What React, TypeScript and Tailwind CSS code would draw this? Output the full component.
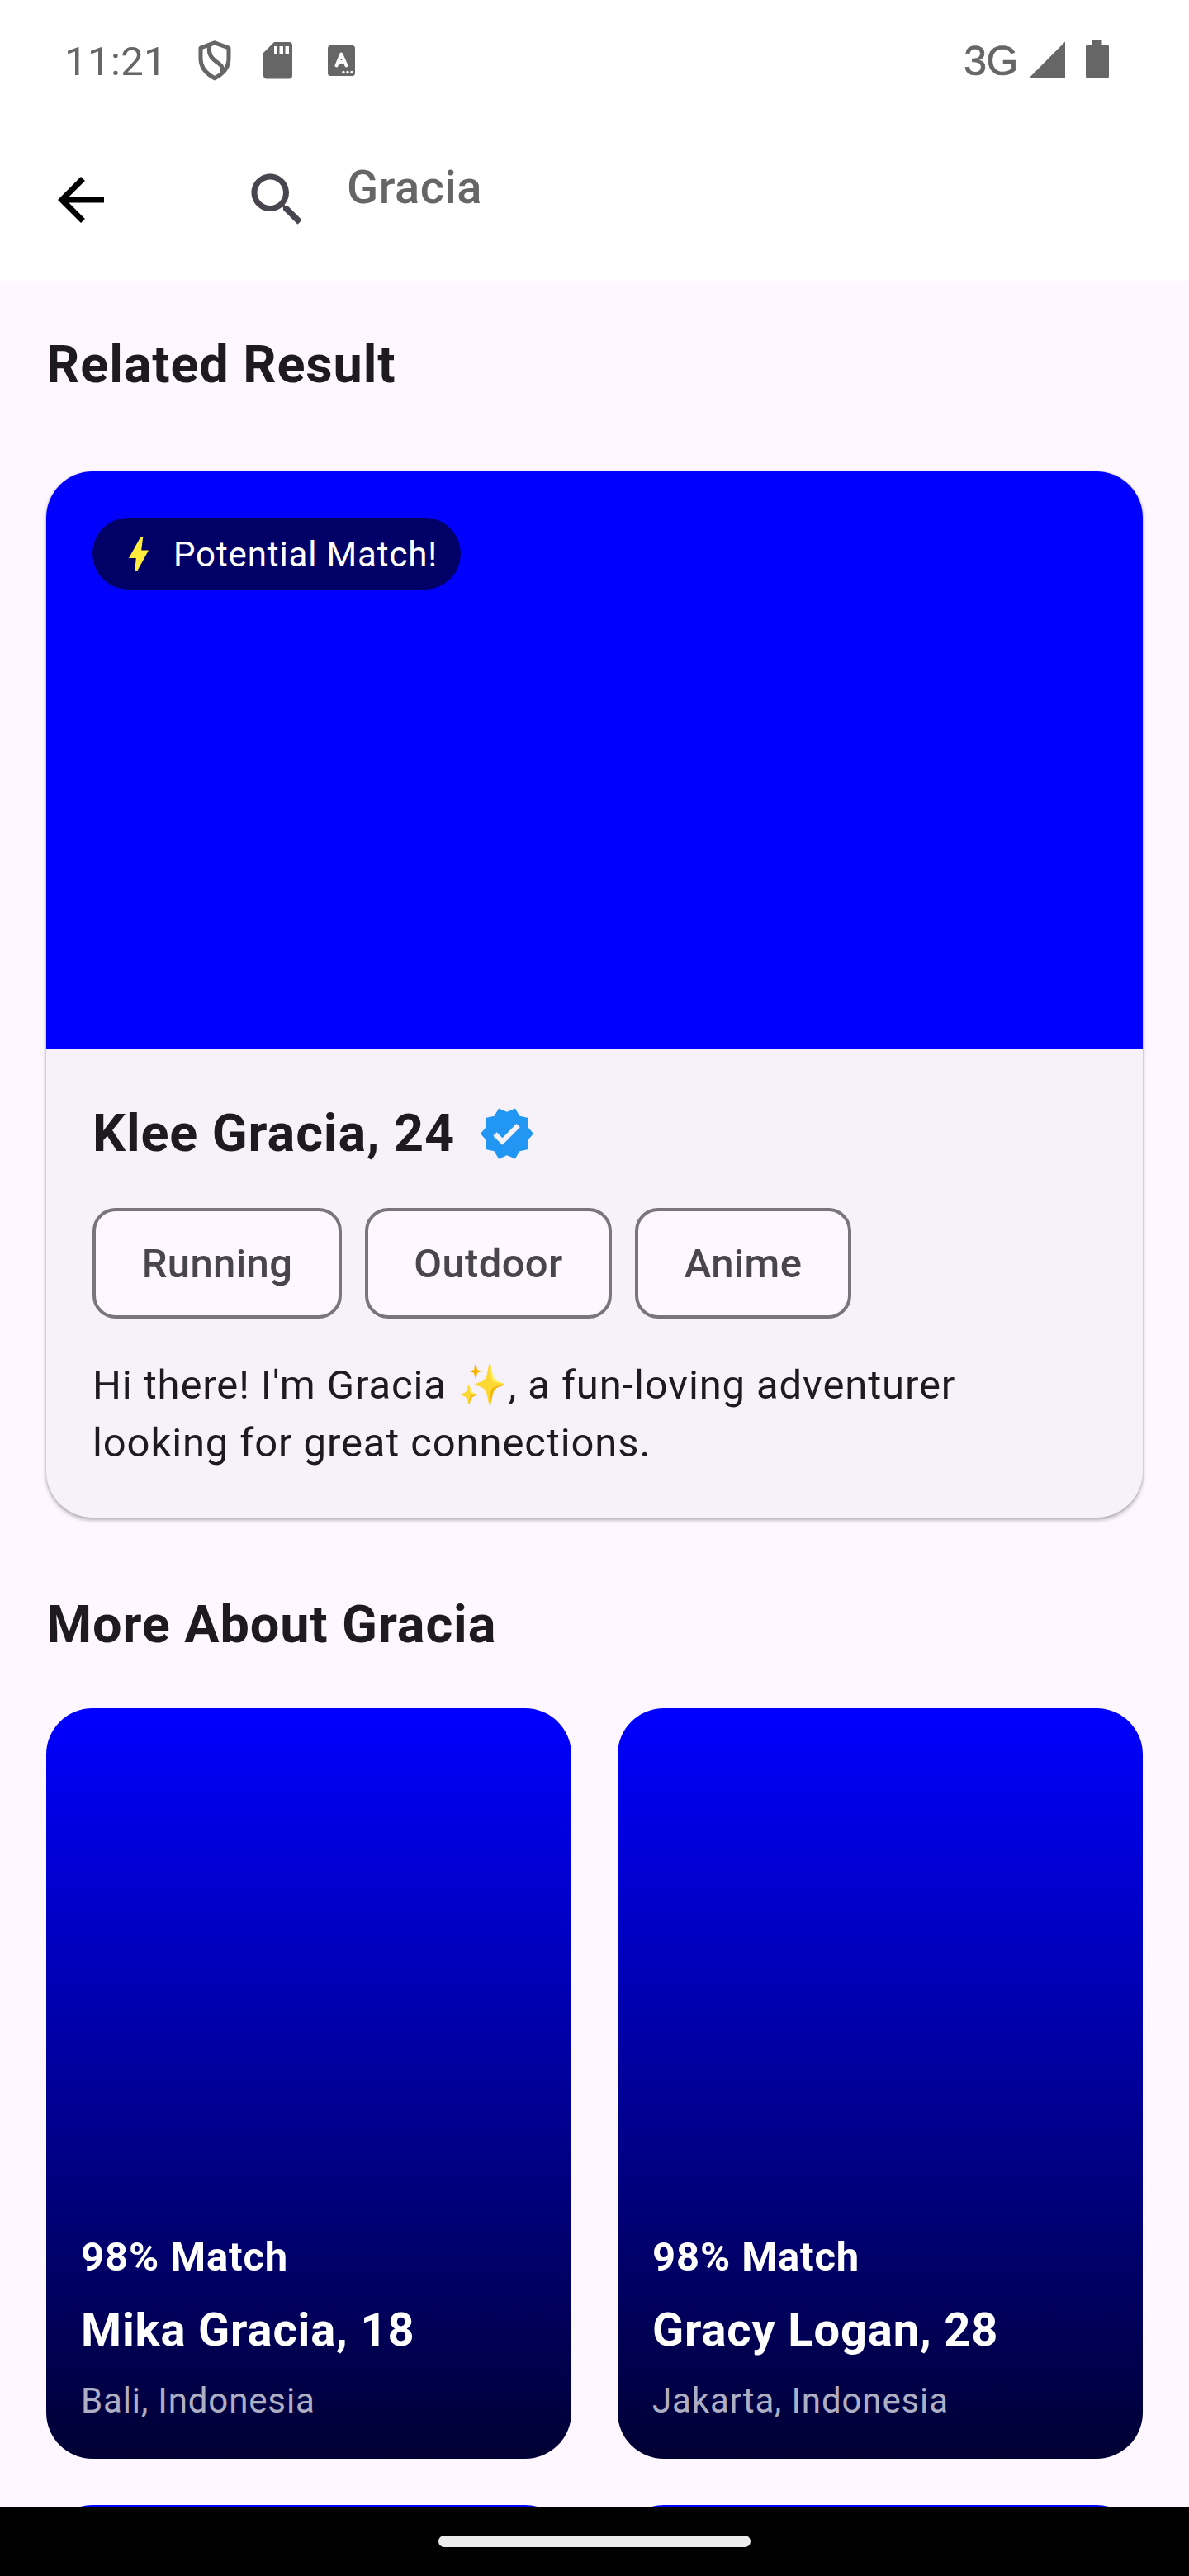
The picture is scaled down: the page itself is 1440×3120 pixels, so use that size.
import React from "react";

const profiles = [
  { match: "98% Match", name: "Mika Gracia, 18", place: "Bali, Indonesia" },
  { match: "98% Match", name: "Gracy Logan, 28", place: "Jakarta, Indonesia" },
];

const interests = [
  { label: "Running", size: "w-[302px]" },
  { label: "Outdoor", size: "w-[299px]" },
  { label: "Anime", size: "w-[262px]" },
];

function StatusBar() {
  return (
    <div className="flex h-[148px] items-center pr-[97px] pb-[2px] pl-[78px] text-[#666666]">
      <span className="mt-[3px] w-[162px] text-[49px] leading-[60px] tracking-[0.4px]">11:21</span>
      <svg className="h-[52px] w-[40px]" viewBox="0 0 40 52" fill="none" stroke="currentColor" strokeWidth="5" strokeLinejoin="round">
        <path d="M20 4.800 37 11V24C37 35 30 42.500 20 47.800 10 42.500 3 35 3 24V11Z" />
        <path d="M14 8C12 16 14 22 21 27 28 32 31 34 28.500 41" />
      </svg>
      <svg className="ml-[39px] h-[52px] w-[35px]" viewBox="0 0 35 52" fill="currentColor" fillRule="evenodd">
        <path d="M13 4H31Q35 4 35 8V44Q35 48.500 31 48.500H4Q0 48.500 0 44V17ZM13 9V18H17V9ZM19.500 9V18H24V9ZM26.500 9V18H31V9Z" />
      </svg>
      <svg className="ml-[43px] h-[52px] w-[33px]" viewBox="0 0 33 52">
        <rect y="8" width="33" height="37" rx="3.500" fill="currentColor" />
        <path d="M10.500 32.500 16.300 18.500 22.500 32.500M12.500 28H20.500" fill="none" stroke="white" strokeWidth="4" strokeLinecap="round" strokeLinejoin="round" />
        <g fill="white"><circle cx="19" cy="40.500" r="1.700" /><circle cx="24" cy="40.500" r="1.700" /><circle cx="29" cy="40.500" r="1.700" /></g>
      </svg>
      <span className="mt-[1px] ml-auto font-['Liberation_Sans'] text-[50px] leading-[60px] tracking-[-0.5px] [-webkit-text-stroke:0.7px_currentColor]">3G</span>
      <svg className="ml-[13px] h-[52px] w-[44px]" viewBox="0 0 44 52" fill="currentColor"><path d="M44 3.500V47.700H0Z" /></svg>
      <svg className="ml-[25px] h-[52px] w-[28px]" viewBox="0 0 28 52" fill="currentColor"><path d="M8 2H19.500V7H25.500Q28 7 28 10V45Q28 47.700 25.500 47.700H2.500Q0 47.700 0 45V10Q0 7 2.500 7H8Z" /></svg>
    </div>
  );
}

function SearchBar() {
  return (
    <div className="flex h-[192px] items-center pb-[4px] pl-[56px]">
      <svg className="size-[84px]" viewBox="0 0 24 24" fill="black"><path d="M20 11H7.830l5.590-5.590L12 4l-8 8 8 8 1.410-1.410L7.830 13H20v-2z" /></svg>
      <svg className="ml-[154px] size-[84px]" viewBox="0 0 24 24" fill="#49454f"><path d="M15.500 14h-.79l-.28-.27C15.410 12.590 16 11.110 16 9.500 16 5.910 13.090 3 9.500 3S3 5.910 3 9.500 5.910 16 9.500 16c1.610 0 3.090-.59 4.230-1.570l.27.28v.79l5 4.990L20.490 19l-4.990-5zm-6 0C7.010 14 5 11.990 5 9.500S7.010 5 9.500 5 14 7.010 14 9.500 11.990 14 9.500 14z" /></svg>
      <span className="mb-[30px] ml-[42px] text-[56px] leading-[84px] font-medium tracking-[0.525px] text-[#666666]">Gracia</span>
    </div>
  );
}

function FeaturedCard() {
  return (
    <article className="mt-[84px] h-[1267px] overflow-hidden rounded-[56px] bg-[#f7f2fa] shadow-[0_3px_5px_rgba(0,0,0,0.3),0_0_3px_rgba(0,0,0,0.12)]">
      <div className="h-[700px] bg-[#0000ff] p-[56px]">
        <div className="flex h-[87px] w-[446px] items-center rounded-full bg-black/60 pl-[42px] text-white">
          <svg className="h-[42px] w-[28px]" viewBox="0 0 28 42" fill="#ffeb3b"><path d="M16.200 .5H19.200L17.200 16.500H26L12 42H9.200L10.800 26H2Z" /></svg>
          <span className="mt-[3px] ml-[28px] text-[42px] leading-[56px] tracking-[0.875px] whitespace-nowrap">Potential Match!</span>
        </div>
      </div>
      <div className="px-[56px] pt-[56px]">
        <div className="flex h-[91px] items-center">
          <h2 className="text-[63px] leading-[91px] font-bold tracking-[0.875px]">Klee Gracia, 24</h2>
          <svg className="ml-[28px] size-[70px]" viewBox="0 0 24 24" fill="#2196f3"><path d="M23 12l-2.440-2.790.34-3.690-3.610-.82-1.890-3.200L12 2.960 8.600 1.500 6.710 4.690 3.100 5.500l.34 3.700L1 12l2.440 2.790-.34 3.700 3.610.82L8.600 22.500l3.400-1.470 3.400 1.460 1.890-3.190 3.610-.82-.34-3.690L23 12zm-12.910 4.720l-3.800-3.810 1.480-1.480 2.320 2.330 5.850-5.870 1.480 1.480-7.330 7.350z" /></svg>
        </div>
        <div className="mt-[45px] flex gap-[28px]">
          {interests.map((item) => (
            <span key={item.label} className={`${item.size} flex h-[134px] items-center justify-center rounded-[28px] border-[4px] border-[#79747e] bg-[#fef7ff] pt-[2px] text-[49px] leading-[70px] font-medium tracking-[0.35px] text-[#49454f]`}>{item.label}</span>
          ))}
        </div>
        <p className="mt-[46px] text-[49px] leading-[70px] tracking-[0.875px]">Hi there! I'm Gracia ✨, a fun-loving adventurer<br />looking for great connections.</p>
      </div>
    </article>
  );
}

export default function App() {
  return (
    <div className="flex h-[3120px] w-[1440px] flex-col overflow-hidden bg-[#fef7ff] font-['Roboto',sans-serif] text-[#1d1b20]">
      <header className="h-[340px] shrink-0 bg-white">
        <StatusBar />
        <SearchBar />
      </header>
      <main className="h-[2696px] shrink-0 overflow-hidden px-[56px] pt-[56px]">
        <h1 className="text-[63px] leading-[91px] font-bold tracking-[0.875px]">Related Result</h1>
        <FeaturedCard />
        <h2 className="mt-[84px] text-[63px] leading-[91px] font-bold tracking-[0.875px]">More About Gracia</h2>
        <div className="mt-[56px] grid grid-cols-2 gap-[56px]">
          {profiles.map((p) => (
            <article key={p.name} className="flex h-[908.6px] flex-col justify-end rounded-[56px] bg-[#0000ff] bg-linear-to-b/srgb from-black/0 to-black/80 px-[42px] pb-[42px] text-white">
              <p className="text-[49px] leading-[70px] font-bold tracking-[0.875px]">{p.match}</p>
              <h3 className="mt-[11px] text-[56px] leading-[84px] font-bold tracking-[0.875px]">{p.name}</h3>
              <p className="mt-[16px] text-[42px] leading-[56px] tracking-[0.875px] text-white/70">{p.place}</p>
            </article>
          ))}
          <div className="h-[908.6px] rounded-[56px] bg-[#0000ff]" />
          <div className="h-[908.6px] rounded-[56px] bg-[#0000ff]" />
        </div>
      </main>
      <footer className="flex h-[84px] shrink-0 items-center justify-center bg-black">
        <div className="h-[14px] w-[378px] rounded-full bg-[#ececec]" />
      </footer>
    </div>
  );
}
